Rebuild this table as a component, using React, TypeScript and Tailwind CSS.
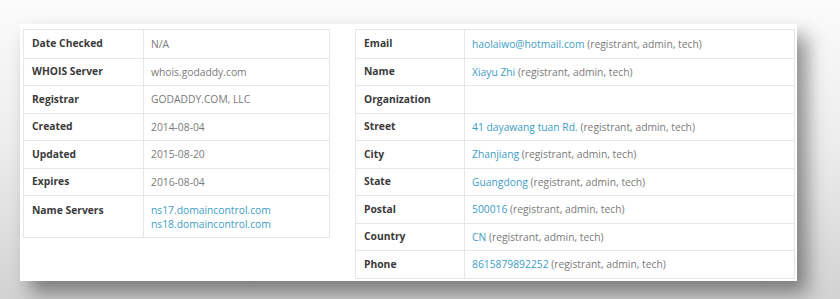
import React from "react";

type Part = { t: string; link?: boolean };

const leftRows: { k: string; v: Part[][] }[] = [
  { k: "Date Checked", v: [[{ t: "N/A" }]] },
  { k: "WHOIS Server", v: [[{ t: "whois.godaddy.com" }]] },
  { k: "Registrar", v: [[{ t: "GODADDY.COM, LLC" }]] },
  { k: "Created", v: [[{ t: "2014-08-04" }]] },
  { k: "Updated", v: [[{ t: "2015-08-20" }]] },
  { k: "Expires", v: [[{ t: "2016-08-04" }]] },
  {
    k: "Name Servers",
    v: [[{ t: "ns17.domaincontrol.com", link: true }], [{ t: "ns18.domaincontrol.com", link: true }]],
  },
];

const suffix = " (registrant, admin, tech)";
const rightRows: { k: string; v: Part[][] }[] = [
  { k: "Email", v: [[{ t: "haolaiwo@hotmail.com", link: true }, { t: suffix }]] },
  { k: "Name", v: [[{ t: "Xiayu Zhi", link: true }, { t: suffix }]] },
  { k: "Organization", v: [] },
  { k: "Street", v: [[{ t: "41 dayawang tuan Rd.", link: true }, { t: suffix }]] },
  { k: "City", v: [[{ t: "Zhanjiang", link: true }, { t: suffix }]] },
  { k: "State", v: [[{ t: "Guangdong", link: true }, { t: suffix }]] },
  { k: "Postal", v: [[{ t: "500016", link: true }, { t: suffix }]] },
  { k: "Country", v: [[{ t: "CN", link: true }, { t: suffix }]] },
  { k: "Phone", v: [[{ t: "8615879892252", link: true }, { t: suffix }]] },
];

function Table({ rows, labelW, width }: { rows: { k: string; v: Part[][] }[]; labelW: string; width: string }) {
  return (
    <div className={`${width} border border-[#e6e6e6] self-start`}>
      {rows.map((r, i) => {
        const multi = r.v.length > 1;
        return (
          <div
            key={r.k}
            className={`flex ${i > 0 ? "border-t border-[#e6e6e6]" : ""} ${multi ? "h-[42px]" : "h-[27.5px]"}`}
          >
            <div
              className={`${labelW} shrink-0 border-r border-[#e6e6e6] px-[8px] flex ${
                multi ? "items-start pt-[7px]" : "items-center"
              } font-bold text-[#3a3a3a]`}
            >
              {r.k}
            </div>
            <div className={`flex-1 px-[7px] flex flex-col ${multi ? "justify-start pt-[7px]" : "justify-center"}`}>
              {r.v.map((line, j) => (
                <div key={j} className="leading-[14px] whitespace-nowrap">
                  {line.map((p, n) => (
                    <span key={n} className={p.link ? "text-[#3d9dc5]" : "text-[#7a7a7a]"}>
                      {p.t}
                    </span>
                  ))}
                </div>
              ))}
            </div>
          </div>
        );
      })}
    </div>
  );
}

export default function App() {
  return (
    <div
      className="w-[840px] h-[299px] overflow-hidden bg-gradient-to-b from-[#fbfbfb] via-[#ececec] to-[#d2d2d2] pt-[24px] pl-[20px]"
      style={{ fontFamily: '"Open Sans", "Noto Sans", Arial, sans-serif' }}
    >
      <div className="w-[777px] h-[257px] bg-white shadow-[10px_12px_18px_rgba(0,0,0,0.42)] pl-[3px] pt-[5px] flex gap-[25px] text-[10.3px]">
        <Table rows={leftRows} labelW="w-[120px]" width="w-[307px]" />
        <Table rows={rightRows} labelW="w-[109px]" width="w-[440px]" />
      </div>
    </div>
  );
}
